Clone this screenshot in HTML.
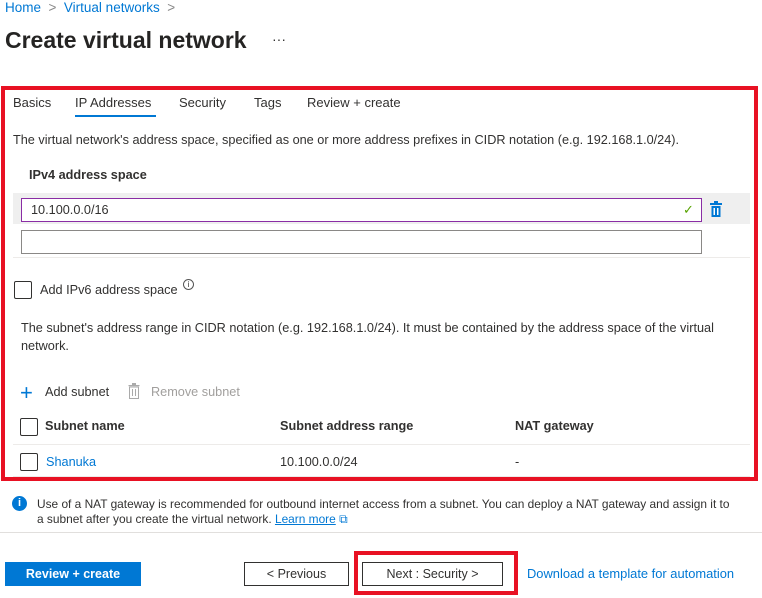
<!DOCTYPE html><html><head><style>
*{box-sizing:border-box;margin:0;padding:0}
body{width:762px;height:598px;background:#fff;font-family:"Liberation Sans",sans-serif;font-size:12.7px;color:#323130;position:relative;overflow:hidden}
.a{position:absolute;white-space:nowrap}
.l{color:#0078d4}
.cb{position:absolute;width:18px;height:18px;border:1px solid #323130;border-radius:2px;background:#fff}
.btn{position:absolute;height:24px;border:1px solid #323130;background:#fff;text-align:center;line-height:22px;font-size:12.5px}
</style></head><body>
<div class="a l" style="left:5px;top:0px;font-size:13.5px">Home &nbsp;<span style="color:#888">&gt;</span>&nbsp; Virtual networks &nbsp;<span style="color:#888">&gt;</span></div>
<div class="a" style="left:5px;top:27px;font-size:23px;font-weight:bold;color:#252423">Create virtual network</div>
<div class="a" style="left:272px;top:31px;font-size:14px">···</div>
<div class="a" style="left:1px;top:86px;width:757px;height:395px;border:4px solid #e81123"></div>
<div class="a" style="left:13px;top:95px;font-size:13px">Basics</div>
<div class="a" style="left:75px;top:95px;font-size:13px">IP Addresses</div>
<div class="a" style="left:75px;top:115px;width:81px;height:2px;background:#0078d4"></div>
<div class="a" style="left:179px;top:95px;font-size:13px">Security</div>
<div class="a" style="left:254px;top:95px;font-size:13px">Tags</div>
<div class="a" style="left:307px;top:95px;font-size:13px">Review + create</div>
<div class="a" style="left:13px;top:133px">The virtual network's address space, specified as one or more address prefixes in CIDR notation (e.g. 192.168.1.0/24).</div>
<div class="a" style="left:29px;top:168px;font-weight:bold">IPv4 address space</div>
<div class="a" style="left:13px;top:193px;width:737px;height:31px;background:#efefef"></div>
<div class="a" style="left:21px;top:198px;width:681px;height:24px;border:1px solid #8a2da5;background:#fff;padding:4px 9px">10.100.0.0/16</div>
<div class="a" style="left:683px;top:202px;color:#57a300;font-size:13px">✓</div>
<svg class="a" style="left:709px;top:201px" width="14" height="17" viewBox="0 0 14 17"><rect x="1" y="2" width="12" height="2" fill="#0078d4"/><rect x="5" y="0" width="4" height="2" fill="#0078d4"/><rect x="2.5" y="5" width="9" height="11" fill="#0078d4"/><rect x="4.5" y="7" width="1.5" height="7" fill="#fff"/><rect x="8" y="7" width="1.5" height="7" fill="#fff"/></svg>
<div class="a" style="left:21px;top:230px;width:681px;height:24px;border:1px solid #8a8886;background:#fff"></div>
<div class="a" style="left:13px;top:257px;width:737px;height:1px;background:#edebe9"></div>
<div class="cb" style="left:14px;top:281px"></div>
<div class="a" style="left:40px;top:283px">Add IPv6 address space</div>
<div class="a" style="left:183px;top:279px;width:11px;height:11px;border:1px solid #555;border-radius:50%;font-size:8px;text-align:center;line-height:9px">i</div>
<div class="a" style="left:21px;top:321px">The subnet's address range in CIDR notation (e.g. 192.168.1.0/24). It must be contained by the address space of the virtual</div>
<div class="a" style="left:21px;top:339px">network.</div>
<div class="a" style="left:20px;top:380px;font-size:22px;color:#0078d4;font-weight:300">+</div>
<div class="a" style="left:45px;top:385px">Add subnet</div>
<svg class="a" style="left:128px;top:383px" width="12" height="16" viewBox="0 0 12 16"><rect x="0.5" y="2" width="11" height="1.2" fill="#aaa"/><rect x="4" y="0" width="4" height="2" fill="#aaa"/><rect x="1.5" y="4" width="9" height="11.5" fill="none" stroke="#aaa"/><rect x="4" y="6" width="1" height="7" fill="#aaa"/><rect x="7" y="6" width="1" height="7" fill="#aaa"/></svg>
<div class="a" style="left:151px;top:385px;color:#a19f9d">Remove subnet</div>
<div class="cb" style="left:20px;top:418px"></div>
<div class="a" style="left:45px;top:419px;font-weight:bold">Subnet name</div>
<div class="a" style="left:280px;top:419px;font-weight:bold">Subnet address range</div>
<div class="a" style="left:515px;top:419px;font-weight:bold">NAT gateway</div>
<div class="a" style="left:13px;top:444px;width:737px;height:1px;background:#edebe9"></div>
<div class="cb" style="left:20px;top:453px"></div>
<div class="a l" style="left:46px;top:455px">Shanuka</div>
<div class="a" style="left:280px;top:455px">10.100.0.0/24</div>
<div class="a" style="left:515px;top:455px">-</div>
<div class="a" style="left:13px;top:476px;width:737px;height:1px;background:#edebe9"></div>
<div class="a" style="left:12px;top:496px;width:15px;height:15px;border-radius:50%;background:#0078d4;color:#fff;font-weight:bold;font-size:11px;text-align:center;line-height:15px">i</div>
<div class="a" style="left:37px;top:497px;font-size:11.9px">Use of a NAT gateway is recommended for outbound internet access from a subnet. You can deploy a NAT gateway and assign it to</div>
<div class="a" style="left:37px;top:512px;font-size:11.9px">a subnet after you create the virtual network. <span class="l" style="text-decoration:underline">Learn more</span> <span class="l">⧉</span></div>
<div class="a" style="left:0;top:532px;width:762px;height:1px;background:#e1dfdd"></div>
<div class="btn" style="left:5px;top:562px;width:136px;background:#0078d4;border-color:#0078d4;color:#fff;font-weight:bold">Review + create</div>
<div class="btn" style="left:244px;top:562px;width:105px">&lt; Previous</div>
<div class="a" style="left:354px;top:551px;width:164px;height:44px;border:4px solid #e81123"></div>
<div class="btn" style="left:362px;top:562px;width:141px">Next : Security &gt;</div>
<div class="a l" style="left:527px;top:566px;font-size:12.9px">Download a template for automation</div>
</body></html>
